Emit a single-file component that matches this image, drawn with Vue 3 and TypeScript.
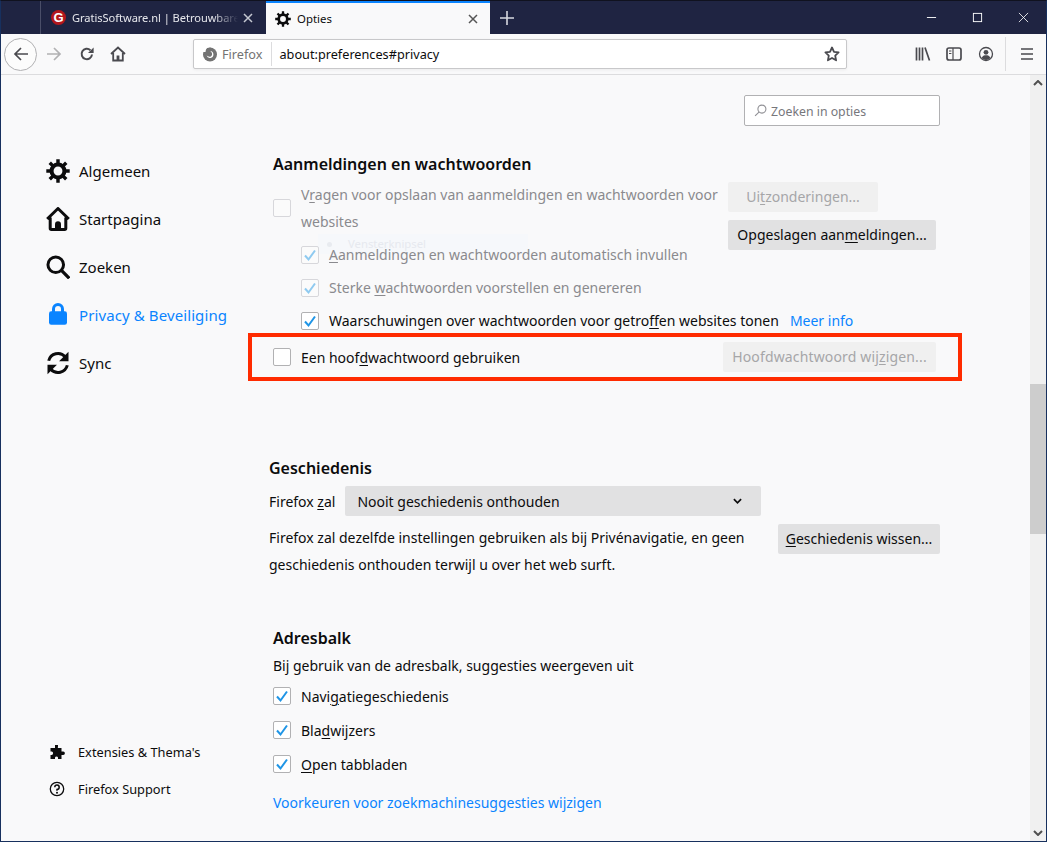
<script setup lang="ts">
const navTop = [
  { label: 'Algemeen', icon: 'gear', active: false },
  { label: 'Startpagina', icon: 'home', active: false },
  { label: 'Zoeken', icon: 'search', active: false },
  { label: 'Privacy & Beveiliging', icon: 'lock', active: true },
  { label: 'Sync', icon: 'sync', active: false },
]
</script>

<template>
  <div class="window">
    <header class="titlebar">
      <div class="tab first">
        <span class="favicon">G</span>
        <span class="tab-title fade">GratisSoftware.nl | Betrouwbare</span>
        <svg class="tab-close" viewBox="0 0 12 12"><path d="M2 2l8 8M10 2l-8 8" stroke="#c5c8d2" stroke-width="1.5" /></svg>
      </div>
      <div class="tab current">
        <svg class="tab-gear" viewBox="0 0 16 16"><use href="#ic-gear" /></svg>
        <span class="tab-title">Opties</span>
        <svg class="tab-close" viewBox="0 0 12 12"><path d="M2 2l8 8M10 2l-8 8" stroke="#555" stroke-width="1.5" /></svg>
      </div>
      <svg class="newtab" viewBox="0 0 14 14"><path d="M7 0v14M0 7h14" stroke="#d6d8df" stroke-width="1.6" /></svg>
      <div class="win-buttons">
        <svg viewBox="0 0 12 12"><path d="M1 6h10" stroke="#fff" /></svg>
        <svg viewBox="0 0 12 12"><rect x="1.5" y="1.5" width="9" height="9" fill="none" stroke="#fff" /></svg>
        <svg viewBox="0 0 12 12"><path d="M1 1l10 10M11 1L1 11" stroke="#fff" stroke-width=".9" /></svg>
      </div>
    </header>

    <nav class="toolbar">
      <div class="back">
        <svg viewBox="0 0 16 16"><path d="M15 8H2M8 2L2 8l6 6" fill="none" stroke="#4a4a4f" stroke-width="1.7" /></svg>
      </div>
      <svg class="tb fwd" viewBox="0 0 16 16"><path d="M1 8h13M8 2l6 6-6 6" fill="none" stroke="#b1b1b3" stroke-width="1.7" /></svg>
      <svg class="tb reload" viewBox="0 0 16 16"><path d="M13 8.5A5.2 5.2 0 1 1 11.4 4.2" fill="none" stroke="#4a4a4f" stroke-width="2" /><path d="M14.6 1.5v5.6H9z" fill="#4a4a4f" /></svg>
      <svg class="tb home" viewBox="0 0 16 16"><path d="M1 8l7-6.5L15 8M3.2 7v7.5h9.6V7" fill="none" stroke="#4a4a4f" stroke-width="1.8" /><rect x="6.6" y="9.500" width="2.8" height="5" fill="#4a4a4f" /></svg>
      <div class="urlbar">
        <svg class="ff" viewBox="0 0 16 16">
          <circle cx="8" cy="8.500" r="7" fill="#737373" />
          <path d="M0 0h6.500C4.500 1.800 3.800 3.500 3.500 6H0z" fill="#fff" />
          <path d="M8.200 5a3.500 3.500 0 1 1-3.600 4.600c1.200 1 3 1.300 4.200.8 1.700-.8 2-3.800-.6-5.400z" fill="#fff" />
          <path d="M5 2.500l3.500-1 1 3.500z" fill="#737373" />
        </svg>
        <span class="ff-label">Firefox</span>
        <span class="url">about:preferences#privacy</span>
        <svg class="star" viewBox="0 0 16 16"><path d="M8 1.500l2 4.300 4.600.6-3.400 3.200.9 4.700L8 12l-4.100 2.300.9-4.700L1.400 6.400 6 5.800z" fill="none" stroke="#4a4a4f" stroke-width="1.800" stroke-linejoin="round" /></svg>
      </div>
      <div class="tools">
        <svg class="lib" viewBox="0 0 16 16"><path d="M1.500 1.500v13M4.500 1.500v13M7.500 1.500v13M10 1.500l4.500 13" stroke="#4a4a4f" stroke-width="1.700" fill="none" /></svg>
        <svg class="side" viewBox="0 0 16 16"><rect x="1" y="2" width="14" height="12" rx="2" fill="none" stroke="#4a4a4f" stroke-width="1.700" /><path d="M7 2v12M3 5h2.400M3 7.500h2.400" stroke="#4a4a4f" stroke-width="1.200" /></svg>
        <svg class="acct" viewBox="0 0 16 16"><circle cx="8" cy="8" r="6.500" fill="none" stroke="#4a4a4f" stroke-width="1.300" /><circle cx="8" cy="6.300" r="2.400" fill="#4a4a4f" /><path d="M3.500 12c1-2.300 2.500-2.800 4.500-2.800s3.500.5 4.500 2.800A6 6 0 0 1 3.500 12z" fill="#4a4a4f" /></svg>
        <span class="divider"></span>
        <svg class="menu" viewBox="0 0 16 16"><path d="M2 3h12M2 8h12M2 13h12" stroke="#4a4a4f" stroke-width="1.700" /></svg>
      </div>
    </nav>

    <svg width="0" height="0" class="defs">
      <defs>
        <g id="ic-gear">
          <circle cx="8" cy="8" r="4.300" fill="none" stroke="#0c0c0d" stroke-width="2.700" />
          <path d="M8 .2v3M8 12.800v3M.2 8h3M12.800 8h3M2.500 2.500l2.100 2.100M11.400 11.400l2.100 2.100M13.500 2.500l-2.100 2.100M4.600 11.400l-2.100 2.100" stroke="#0c0c0d" stroke-width="2.300" />
        </g>
      </defs>
    </svg>

    <div class="viewport">
      <aside class="sidebar">
        <ul class="nav">
          <li v-for="item in navTop" :key="item.label" :class="{ active: item.active }">
            <svg v-if="item.icon === 'gear'" viewBox="0 0 16 16"><use href="#ic-gear" /></svg>
            <svg v-else-if="item.icon === 'home'" viewBox="0 0 16 16"><path d="M.8 8L8 1l7.200 7M2.800 7v7.200c0 .5.300.8.800.8h8.800c.5 0 .8-.3.800-.8V7" fill="none" stroke="#0c0c0d" stroke-width="2" stroke-linejoin="round" /><path d="M6 15v-3.500a2 2 0 0 1 4 0V15z" fill="#0c0c0d" /></svg>
            <svg v-else-if="item.icon === 'search'" viewBox="0 0 16 16"><circle cx="6.500" cy="6.500" r="5.200" fill="none" stroke="#0c0c0d" stroke-width="2" /><path d="M10.300 10.300L15.500 15.500" stroke="#0c0c0d" stroke-width="2.200" /></svg>
            <svg v-else-if="item.icon === 'lock'" viewBox="0 0 16 16"><path d="M5 6V4a3 3 0 0 1 6 0v2" fill="none" stroke="#0a84ff" stroke-width="2" /><rect x="2" y="5.500" width="12" height="9" rx="1.500" fill="#0a84ff" /></svg>
            <svg v-else viewBox="0 0 16 16"><path d="M1.800 6.500A6.400 6.400 0 0 1 12.800 3.800" fill="none" stroke="#0c0c0d" stroke-width="2" /><path d="M15 .5v6.300H8.700z" fill="#0c0c0d" /><path d="M14.200 9.500A6.400 6.400 0 0 1 3.200 12.200" fill="none" stroke="#0c0c0d" stroke-width="2" /><path d="M1 15.500V9.200h6.300z" fill="#0c0c0d" /></svg>
            <span>{{ item.label }}</span>
          </li>
        </ul>
        <ul class="nav-foot">
          <li>
            <svg viewBox="0 0 16 16"><path d="M6 1h3v1.500a1.500 1.500 0 0 0 0 1.500h3.500v3.500h1.700a1.700 1.700 0 0 1 0 3.400h-1.700V15H9v-1.500a1.600 1.600 0 0 0-3 0V15H1.500v-4h1.200a1.800 1.800 0 0 0 0-3.500H1.500V4H6V2.500z" fill="#0c0c0d" /></svg>
            <span>Extensies &amp; Thema's</span>
          </li>
          <li>
            <svg viewBox="0 0 16 16"><circle cx="8" cy="8" r="6.700" fill="none" stroke="#0c0c0d" stroke-width="1.300" /><path d="M5.800 6.200A2.200 2.200 0 1 1 8 8.500v1.300" fill="none" stroke="#0c0c0d" stroke-width="1.500" /><circle cx="8" cy="11.800" r="1" fill="#0c0c0d" /></svg>
            <span>Firefox Support</span>
          </li>
        </ul>
      </aside>

      <main class="main">
        <div class="search-row">
          <div class="search">
            <svg viewBox="0 0 12 12"><circle cx="7.300" cy="4.700" r="3.700" fill="none" stroke="#8f8f94" /><path d="M4.600 7.400L1 11" stroke="#8f8f94" /></svg>
            <span>Zoeken in opties</span>
          </div>
        </div>

        <section class="logins">
          <h2>Aanmeldingen en wachtwoorden</h2>
          <div class="login-top">
            <div class="login-left">
              <div class="check-wrap dim multi">
                <span class="box dim-box"></span>
                <span class="multi-label">V<u>r</u>agen voor opslaan van aanmeldingen en wachtwoorden voor websites</span>
              </div>
              <div class="sub">
                <div class="ghost"><i></i><em>Vensterknipsel</em></div>
                <label class="check dim"><span class="box dim-box on"><svg viewBox="0 0 16 16"><path d="M3 8.500l3.500 4L13 3.500" /></svg></span><span><u>A</u>anmeldingen en wachtwoorden automatisch invullen</span></label>
                <label class="check dim"><span class="box dim-box on"><svg viewBox="0 0 16 16"><path d="M3 8.500l3.500 4L13 3.500" /></svg></span><span>Sterke <u>w</u>achtwoorden voorstellen en genereren</span></label>
              </div>
            </div>
            <div class="login-buttons">
              <button class="btn disabled exc">Ui<u>t</u>zonderingen...</button>
              <button class="btn saved">Opgeslagen aan<u>m</u>eldingen...</button>
            </div>
          </div>
          <label class="check breach"><span class="box on"><svg viewBox="0 0 16 16"><path d="M3 8.500l3.500 4L13 3.500" /></svg></span><span>Waarschuwingen over wachtwoorden voor getro<u>f</u>fen websites tonen</span><a>Meer info</a></label>
          <div class="master">
            <label class="check"><span class="box"></span><span>Een hoof<u>d</u>wachtwoord gebruiken</span></label>
            <button class="btn disabled change">Hoofdwachtwoord wij<u>z</u>igen...</button>
          </div>
        </section>

        <section class="history">
          <h2>Geschiedenis</h2>
          <div class="hist-select">
            <span>Firefox <u>z</u>al</span>
            <div class="select">
              <span>Nooit geschiedenis onthouden</span>
              <svg viewBox="0 0 10 6"><path d="M1 1l4 4 4-4" fill="none" stroke="#0c0c0d" stroke-width="1.900" /></svg>
            </div>
          </div>
          <div class="hist-desc">
            <p>Firefox zal dezelfde instellingen gebruiken als bij Privénavigatie, en geen geschiedenis onthouden terwijl u over het web surft.</p>
            <button class="btn wipe"><u>G</u>eschiedenis wissen...</button>
          </div>
        </section>

        <section class="address">
          <h2>Adresbalk</h2>
          <p class="intro">Bij gebruik van de adresbalk, suggesties weergeven uit</p>
          <label class="check"><span class="box on"><svg viewBox="0 0 16 16"><path d="M3 8.500l3.500 4L13 3.500" /></svg></span><span>Navi<u>g</u>atiegeschiedenis</span></label>
          <label class="check"><span class="box on"><svg viewBox="0 0 16 16"><path d="M3 8.500l3.500 4L13 3.500" /></svg></span><span>Bla<u>d</u>wijzers</span></label>
          <label class="check"><span class="box on"><svg viewBox="0 0 16 16"><path d="M3 8.500l3.500 4L13 3.500" /></svg></span><span><u>O</u>pen tabbladen</span></label>
          <a class="prefs-link">Voorkeuren voor zoekmachinesuggesties wijzigen</a>
        </section>
      </main>

      <div class="scrollbar">
        <svg viewBox="0 0 10 6"><path d="M1 5l4-4 4 4" fill="none" stroke="#505050" stroke-width="2" /></svg>
        <div class="track"><div class="thumb"></div></div>
        <svg viewBox="0 0 10 6"><path d="M1 1l4 4 4-4" fill="none" stroke="#505050" stroke-width="2" /></svg>
      </div>
    </div>
  </div>
</template>

<style scoped>
.window {
  width: 1047px;
  height: 842px;
  box-sizing: border-box;
  border: 1px solid #17305e;
  border-top-color: #10121f;
  display: flex;
  flex-direction: column;
  overflow: hidden;
  font-family: "Noto Sans", "Open Sans", sans-serif;
  color: #0c0c0d;
  background: #f9f9fa;
}
u { text-underline-offset: 2px; text-decoration-thickness: 1px; }
.defs { position: absolute; }

.titlebar {
  height: 33px;
  flex: none;
  background: #1f2442;
  display: flex;
  padding-left: 39px;
  font-size: 11.4px;
}
.tab { display: flex; align-items: center; box-sizing: border-box; height: 33px; }
.tab.first { width: 226px; color: #e6e7ec; border-left: 1px solid #4a4e68; padding: 0 12px 0 10px; }
.tab.current { width: 224px; background: #f9f9fa; border-top: 2px solid #0a84ff; color: #0c0c0d; padding: 0 11px 0 9px; }
.favicon {
  width: 15px; height: 15px; border-radius: 50%;
  background: #b3161c; color: #fff; font: bold 13px/15px "Liberation Sans", sans-serif;
  text-align: center; flex: none; margin-right: 6px;
}
.tab-gear { width: 16px; height: 16px; margin-right: 6px; flex: none; }
.tab-title { flex: 1; white-space: nowrap; overflow: hidden; }
.first .tab-title { font-size: 11.1px; letter-spacing: -.05px; }
.fade { -webkit-mask-image: linear-gradient(90deg, #000 85%, transparent); mask-image: linear-gradient(90deg, #000 85%, transparent); }
.tab-close { width: 12px; height: 12px; flex: none; margin-left: 4px; }
.newtab { width: 14px; height: 14px; margin: 10px 0 0 10px; }
.win-buttons { margin-left: auto; display: flex; align-items: center; gap: 35px; padding-right: 17px; }
.win-buttons svg { width: 11px; height: 11px; }

.toolbar {
  height: 41px;
  flex: none;
  box-sizing: border-box;
  background: #f9f9fa;
  border-bottom: 1px solid #dcdcde;
  display: flex;
  align-items: center;
  padding: 0 0 0 3px;
}
.back {
  width: 33px; height: 33px; box-sizing: border-box; border: 1px solid #b1b1b3; border-radius: 50%;
  display: flex; align-items: center; justify-content: center; background: #fcfcfc; flex: none;
}
.back svg { width: 16px; height: 16px; }
.tb { width: 16px; height: 16px; flex: none; }
.fwd { margin-left: 9px; }
.reload { margin-left: 17px; }
.home { margin-left: 15px; }
.urlbar {
  width: 654px; height: 30px; box-sizing: border-box;
  margin-left: 67px;
  background: #fff; border: 1px solid #c8c8ca; border-radius: 2px;
  display: flex; align-items: center; padding: 0 6px 0 8px; font-size: 12.7px;
  box-shadow: 0 1px 3px rgba(0,0,0,.06);
}
.ff { width: 16px; height: 16px; margin-right: 4px; flex: none; }
.ff-label { color: #737373; padding-right: 8px; border-right: 1px solid #dcdcde; margin-right: 8px; line-height: 24px; }
.url { flex: 1; }
.star { width: 16px; height: 16px; flex: none; }
.tools { display: flex; align-items: center; margin-left: 68px; }
.tools svg { width: 16px; height: 16px; flex: none; }
.lib { margin-right: 15px; }
.side { margin-right: 16px; }
.acct { margin-right: 11px; }
.divider { width: 1px; height: 34px; background: #dcdcde; margin-right: 13px; }

.viewport { flex: 1; display: flex; min-height: 0; position: relative; }
.sidebar {
  width: 246px; flex: none; display: flex; flex-direction: column; justify-content: space-between;
  padding: 72px 0 34px 45px; box-sizing: border-box;
}
.nav, .nav-foot { list-style: none; margin: 0; padding: 0; }
.nav li { display: flex; align-items: center; height: 48px; font-size: 15px; }
.nav li svg { width: 24px; height: 24px; margin-right: 9px; flex: none; }
.nav li.active { color: #0a84ff; letter-spacing: .1px; }
.nav-foot li { display: flex; align-items: center; height: 37px; font-size: 12.8px; }
.nav-foot svg { width: 16px; height: 16px; margin: 0 13px 0 3px; flex: none; }

.main { width: 783px; flex: none; font-size: 14px; box-sizing: border-box; position: relative; padding-right: 32px; }
.search-row { display: flex; justify-content: flex-end; padding: 20px 58px 0 0; }
.search {
  width: 196px; height: 31px; box-sizing: border-box;
  border: 1px solid #b1b1b3; border-radius: 2px; background: #fff;
  display: flex; align-items: center; gap: 4px; padding-left: 9px; font-size: 12.3px; color: #77777c;
}
.search span { padding-top: 1px; }
.search svg { width: 13px; height: 13px; }
h2 { font-size: 16px; font-weight: 600; margin: 0; line-height: 24px; }

.logins { padding: 0 0 0 26px; margin-top: 26px; position: relative; }
.login-top { display: flex; justify-content: space-between; margin-top: 5px; padding-right: 62px; }
.login-left { width: 450px; }
.check-wrap { display: flex; align-items: center; }
.multi-label { line-height: 27px; width: 424px; }
.dim { color: #8a8a8e; }
.check { display: flex; align-items: center; min-height: 33px; }
.box {
  width: 18px; height: 18px; flex: none; box-sizing: border-box;
  border: 1px solid #b1b1b3; border-radius: 2px; background: #fff;
  margin-right: 10px; display: flex; align-items: center; justify-content: center;
}
.dim-box { border-color: #d7d7db; background: #fbfbfb; }
.box svg { width: 16px; height: 16px; }
.box path { fill: none; stroke: #1f95e6; stroke-width: 2; }
.dim-box path { stroke: #8fcaf0; }
.sub { padding: 3px 0 0 28px; position: relative; }
.ghost {
  position: absolute; left: 45px; top: -1px; width: 210px; height: 20px;
  background: #f6f8fb; display: flex; align-items: center; font-size: 11.3px; gap: 16px; padding-left: 9px; box-sizing: border-box; z-index: 0;
}
.ghost i { width: 5px; height: 5px; border-radius: 50%; background: #e8ebf0; }
.ghost em { font-style: normal; color: #e6e9ef; line-height: 12px; }
.sub .check { position: relative; z-index: 1; }
.login-buttons { display: flex; flex-direction: column; align-items: flex-start; gap: 8px; margin-top: 1px; width: 208px; }
.btn {
  font: inherit; font-size: 14px; color: #0c0c0d; background: #e1e1e2; border: 0; border-radius: 2px;
  height: 30px; padding: 0 0 2px; white-space: nowrap; flex: none;
}
.btn.disabled { background: #f0f0f0; color: #a6a6a8; }
.exc { width: 150px; }
.saved { width: 208px; }
.change { width: 213px; letter-spacing: .15px; }
.wipe { width: 162px; }
.breach { padding-left: 28px; margin-top: 0; }
.breach a { color: #0a84ff; margin-left: 11px; }
.master {
  display: flex; justify-content: space-between; align-items: center;
  width: 714px; height: 48px; box-sizing: border-box;
  margin: -4px 0 0 -25px; padding: 0 22px 0 21px;
  border: 4px solid #ff2b00;
}

.history { padding: 0 58px 0 22px; margin-top: 75px; }
.hist-select { display: flex; align-items: center; gap: 10px; margin-top: 6px; }
.select {
  width: 416px; height: 30px; box-sizing: border-box; background: #e1e1e2; border-radius: 2px;
  display: flex; align-items: center; justify-content: space-between; padding: 0 19px 0 12px;
}
.select svg { width: 9px; height: 6px; }
.hist-desc { display: flex; justify-content: space-between; margin-top: 8px; }
.hist-desc p { margin: 0; line-height: 27px; width: 490px; }

.address { padding-left: 26px; margin-top: 48px; }
.intro { margin: 6px 0 3px; line-height: 20px; }
.address .check { min-height: 34px; }
.prefs-link { color: #0a84ff; display: block; margin-top: 12px; }

.scrollbar {
  width: 16px; flex: none; box-sizing: border-box; background: #f0f0f0; margin-left: auto;
  display: flex; flex-direction: column; align-items: center; justify-content: space-between; padding: 5px 0;
}
.scrollbar svg { width: 10px; height: 6px; flex: none; }
.track { flex: 1; width: 100%; padding-top: 298px; box-sizing: border-box; }
.thumb { height: 150px; background: #cdcdcd; }
</style>
